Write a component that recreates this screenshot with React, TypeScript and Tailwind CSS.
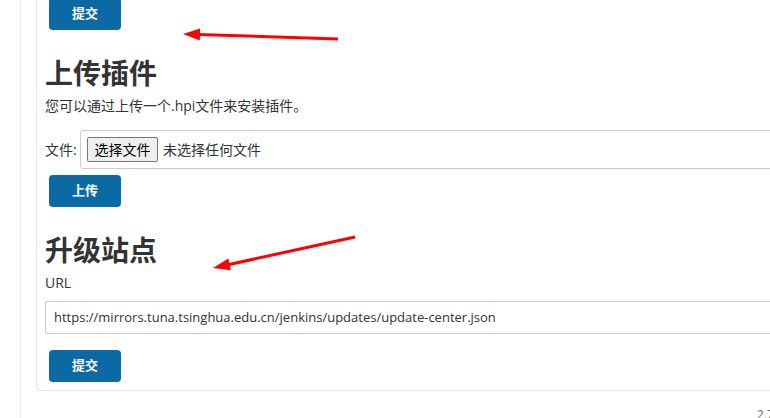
const SubmitButton = ({ label }: { label: string }) => {
  return (
    <button className="ml-[4px] flex h-[32px] w-[72px] items-center justify-center rounded-[4px] bg-[#0b69a3] text-[13px] font-bold text-white">
      {label}
    </button>
  );
};

const App = () => {
  return (
    <div className="relative h-[418px] w-[770px] overflow-hidden bg-white font-['Open_Sans','Noto_Sans_CJK_SC',sans-serif] text-[#333]">
      <div className="flex h-full">
        <div className="w-[21px] shrink-0 border-r border-[#e6edf2]" />
        <div className="flex-1 pl-[15px]">
          <div className="-mt-[2px] w-[800px] rounded-bl-[6px] border-b border-l border-[#e6e6e6] pb-[8px] pl-2">
            <SubmitButton label="提交" />

            <h1 className="mt-[24px] text-[28px] font-bold leading-[38px]">上传插件</h1>
            <p className="mt-[4px] text-[14px] leading-[20px]">您可以通过上传一个.hpi文件来安装插件。</p>

            <div className="mt-[14px] flex items-center">
              <span className="w-[35px] text-[14px]">文件:</span>
              <div className="flex h-[39px] flex-1 items-center rounded-[3px] border border-[#ccc] pl-[6px]">
                <span className="flex h-[25px] w-[71px] items-center justify-center rounded-[2px] border border-[#767676] bg-[#efefef] text-[14px] text-black">
                  选择文件
                </span>
                <span className="ml-[5px] text-[14px]">未选择任何文件</span>
              </div>
            </div>

            <div className="mt-[6px]">
              <SubmitButton label="上传" />
            </div>

            <h1 className="mt-[24px] text-[28px] font-bold leading-[38px]">升级站点</h1>
            <div className="mt-[4px] text-[14px] font-medium leading-[20px]">URL</div>
            <div className="mt-[8px] flex h-[33px] items-center rounded-[2px] border border-[#ccc] pl-[8px] text-[13px]">
              https://mirrors.tuna.tsinghua.edu.cn/jenkins/updates/update-center.json
            </div>

            <div className="mt-[16px]">
              <SubmitButton label="提交" />
            </div>
          </div>

          <div className="ml-[721px] mt-[16px] whitespace-nowrap text-[12px] leading-[16px] text-[#666]">2.7</div>
        </div>
      </div>

      <svg className="pointer-events-none absolute left-0 top-0" width="770" height="418">
        <line x1="338" y1="39" x2="198" y2="34.5" stroke="#ff0000" strokeWidth="3" />
        <polygon points="183,34 199.8,40.5 200.2,28.5" fill="#ff0000" />
        <line x1="355" y1="237" x2="228" y2="264.7" stroke="#ff0000" strokeWidth="3" />
        <polygon points="213,268 230.9,270.3 228.3,258.5" fill="#ff0000" />
      </svg>
    </div>
  );
};

export default App;
